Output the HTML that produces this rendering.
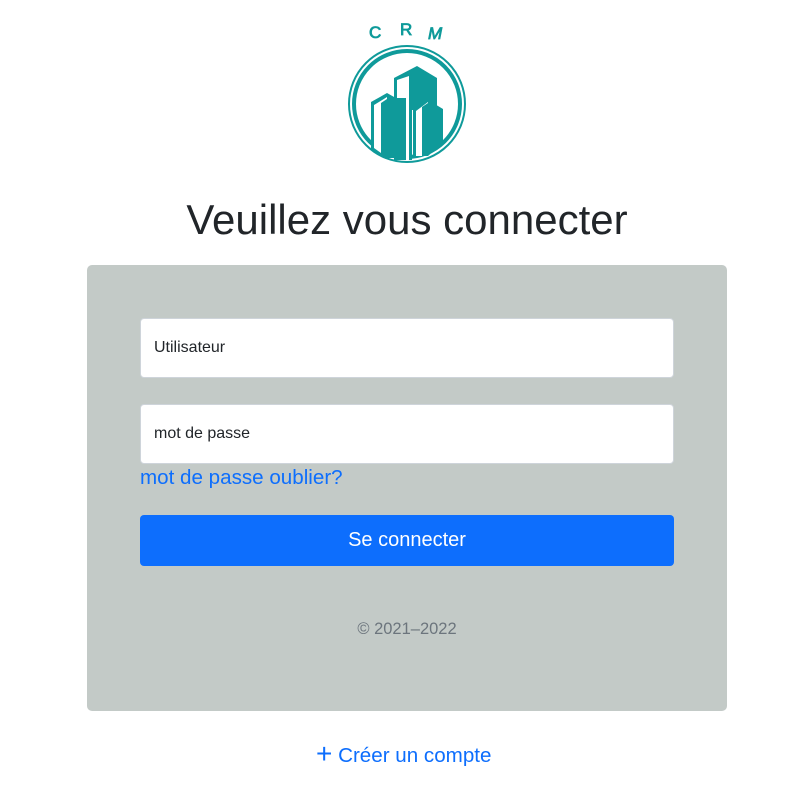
<!DOCTYPE html>
<html><head><meta charset="utf-8"><style>
body{margin:0;background:#fff;font-family:"Liberation Sans",Arial,sans-serif;width:794px;height:794px;position:relative;overflow:hidden}
.abs{position:absolute}
h1{position:absolute;top:196px;left:0;width:814px;text-align:center;margin:0;font-weight:400;font-size:42px;color:#212529}
.card{position:absolute;left:87px;top:265px;width:640px;height:446px;background:#c3cac7;border-radius:5px}
.inp{position:absolute;left:140px;width:534px;height:60px;background:#fff;border:1px solid #ced4da;border-radius:4px;box-sizing:border-box;font-size:16px;color:#212529;padding-left:13px;line-height:58px}
.btn{position:absolute;left:140px;top:515px;width:534px;height:51px;background:#0d6efd;border-radius:4px;color:#fff;font-size:20px;text-align:center;line-height:51px}
</style></head><body>
<svg class="abs" style="left:340px;top:10px" width="140" height="160" viewBox="0 0 140 160">
<g fill="#0f9a9a" stroke="#0f9a9a" stroke-width="0.8" font-size="17" font-family="Liberation Sans">
<text x="29" y="28">C</text>
<text x="60" y="25">R</text>
<text x="88" y="29" font-style="italic">M</text>
</g>
<circle cx="67" cy="94" r="58" fill="none" stroke="#0f9a9a" stroke-width="2"/>
<circle cx="67" cy="94" r="53" fill="none" stroke="#0f9a9a" stroke-width="4"/>
<path d="M54 68 L77 56 L97 68 L97 100 L72 100 L72 150 L54 150Z" fill="#0f9a9a"/>
<path d="M57 70 L57 88 L66 88 L66 150 L69 150 L69 66Z" fill="#fff"/>
<path d="M31 92 L47 83 L63 92 L63 148 L44 148 L31 140Z" fill="#0f9a9a"/>
<path d="M34 95 L34 138 L41 143 L41 93 L47 89 L47 87Z" fill="#fff"/>
<path d="M73 99 L88 90 L103 99 L103 133 L88 146 L73 146Z" fill="#0f9a9a"/>
<path d="M76 101 L76 146 L82 146 L82 97 L88 93 L88 92Z" fill="#fff"/>
</svg>
<h1>Veuillez vous connecter</h1>
<div class="card"></div>
<div class="inp" style="top:318px">Utilisateur</div>
<div class="inp" style="top:404px">mot de passe</div>
<div class="abs" style="left:140px;top:466px;font-size:20.6px;color:#0d6efd">mot de passe oublier?</div>
<div class="btn">Se connecter</div>
<div class="abs" style="left:0;width:814px;text-align:center;top:620px;font-size:16.5px;color:#6c757d">© 2021–2022</div>
<div class="abs" style="left:316px;top:743px;font-size:20.6px;color:#0d6efd"><span style="font-size:28px;font-weight:300;line-height:20px;position:relative;top:1px">+</span> Créer un compte</div>
</body></html>
